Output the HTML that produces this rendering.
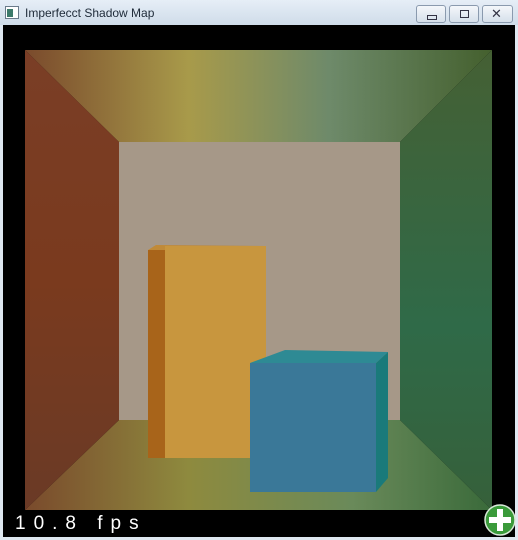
<!DOCTYPE html>
<html><head><style>
body{margin:0;width:518px;height:540px;overflow:hidden;background:#dfe8f1;font-family:"Liberation Sans",sans-serif}
.tb{position:absolute;left:0;top:0;width:518px;height:25px;background:linear-gradient(#e6eef7,#cfdce9);border-bottom:0}
.title{position:absolute;left:25px;top:6px;font-size:12px;color:#1e2a38}
.btn{position:absolute;top:5px;height:16px;border:1px solid #8a9aae;border-radius:3px;background:linear-gradient(#f4f7fb,#d6e0eb)}
.vp{position:absolute;left:3px;top:25px;width:512px;height:512px;background:#000}
</style></head><body>
<div class="tb"></div>
<svg style="position:absolute;left:5px;top:6px" width="14" height="13"><rect x="0.5" y="0.5" width="13" height="12" fill="#fff" stroke="#6a7a8a"/><rect x="2" y="3" width="6" height="8" fill="#3c7a6a"/></svg>
<div class="title">Imperfecct Shadow Map</div>
<div class="btn" style="left:416px;width:28px"><div style="position:absolute;left:10px;top:9px;width:8px;height:3px;border:1px solid #334"></div></div>
<div class="btn" style="left:449px;width:28px"><div style="position:absolute;left:10px;top:4px;width:7px;height:6px;border:1px solid #334"></div></div>
<div class="btn" style="left:482px;width:29px"><div style="position:absolute;left:8px;top:0px;font-size:13px;color:#334">✕</div></div>
<div class="vp"></div>
<svg style="position:absolute;left:0;top:0" width="518" height="540">
<defs>
<linearGradient id="c" x1="0" x2="1"><stop offset="0" stop-color="#7a4a2c"/><stop offset=".35" stop-color="#a89a4a"/><stop offset=".65" stop-color="#6e8a6a"/><stop offset="1" stop-color="#44602e"/></linearGradient>
<linearGradient id="f" x1="0" x2="1"><stop offset="0" stop-color="#7a4a2c"/><stop offset=".35" stop-color="#8e8a3e"/><stop offset=".7" stop-color="#6a8a5a"/><stop offset="1" stop-color="#3a6a3a"/></linearGradient>
<linearGradient id="l" x1="0" y1="0" x2="0" y2="1"><stop offset="0" stop-color="#7a3e26"/><stop offset=".5" stop-color="#7a3a1e"/><stop offset="1" stop-color="#6a3a26"/></linearGradient>
<linearGradient id="r" x1="0" y1="0" x2="0" y2="1"><stop offset="0" stop-color="#456034"/><stop offset=".6" stop-color="#2f6a48"/><stop offset="1" stop-color="#36603a"/></linearGradient>
</defs>
<polygon points="25,50 492,50 400,142 119,142" fill="url(#c)"/>
<polygon points="25,510 492,510 400,420 119,420" fill="url(#f)"/>
<polygon points="25,50 119,142 119,420 25,510" fill="url(#l)"/>
<polygon points="492,50 400,142 400,420 492,510" fill="url(#r)"/>
<rect x="119" y="142" width="281" height="278" fill="#a69888"/>
<polygon points="148,250 156,245 266,246 165,251" fill="#c08a38"/>
<rect x="148" y="250" width="17" height="208" fill="#a8641a"/>
<rect x="165" y="246" width="101" height="212" fill="#c8963e"/>
<polygon points="250,363 285,350 388,352 376,363" fill="#2e8a94"/>
<polygon points="376,363 388,352 388,478 376,492" fill="#1a7a7a"/>
<rect x="250" y="363" width="126" height="129" fill="#3a7898"/>
<text x="15" y="529" fill="#fff" font-size="19" letter-spacing="8" font-family="Liberation Sans">10.8 fps</text>
<circle cx="500" cy="520" r="15" fill="#3a9a3a" stroke="#d8e8d8" stroke-width="1.5"/>
<rect x="497" y="509" width="6" height="22" fill="#fff"/><rect x="489" y="517" width="22" height="6" fill="#fff"/>
</svg>
</body></html>
